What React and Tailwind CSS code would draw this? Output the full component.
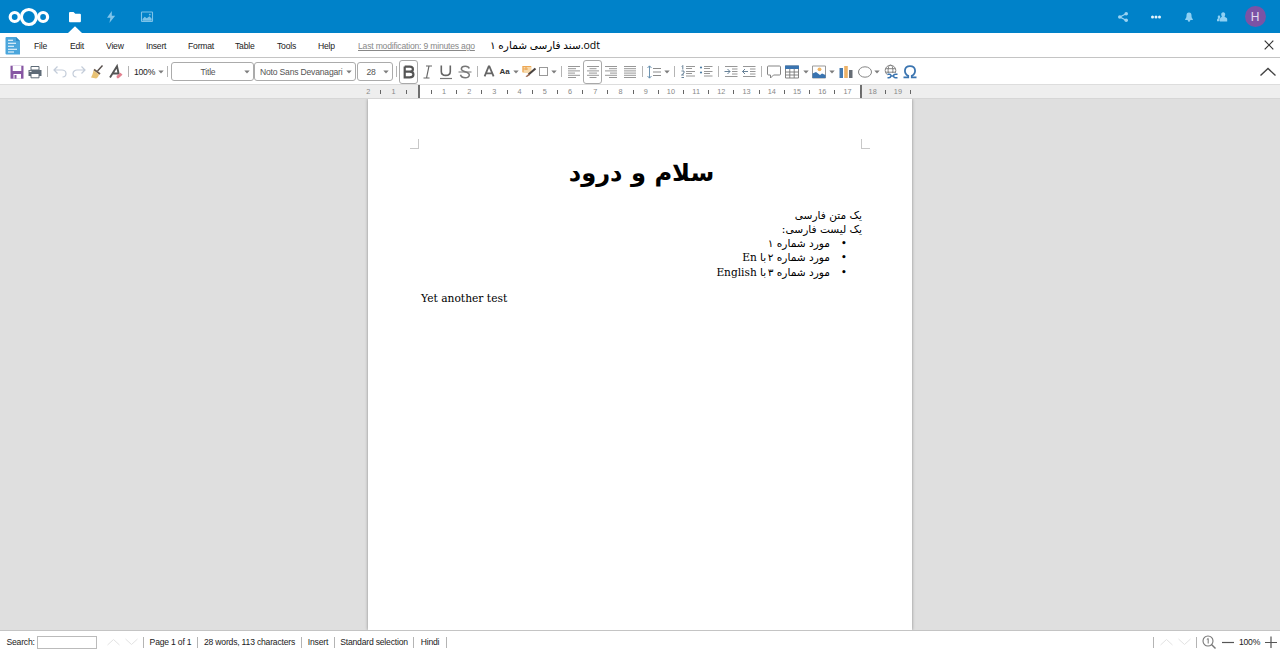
import React from "react";

const Icon = ({ w = 18, h = 18, children, className = "" }) => (
  <svg width={w} height={h} viewBox={`0 0 ${w} ${h}`} fill="none" className={`shrink-0 ${className}`}>
    {children}
  </svg>
);

const Cell = ({ className, children }) => (
  <div className={`flex h-full shrink-0 items-center justify-center ${className}`}>{children}</div>
);

const Sep = ({ className }) => (
  <Cell className={className}>
    <div className="h-[11px] w-px bg-[#b4b4b4]" />
  </Cell>
);

const Arrow = ({ className = "" }) => (
  <Cell className={className}>
    <Icon w={6} h={4}>
      <path d="M0.3 0.5h5.4L3 3.5z" fill="#7d7d7d" />
    </Icon>
  </Cell>
);

const Combo = ({ className, label, labelClass }) => (
  <div className={`flex h-[19px] shrink-0 items-center rounded-[3px] border border-[#ababab] bg-white pr-[3px] text-[#555] ${className}`}>
    <span className={`flex-1 whitespace-nowrap ${labelClass}`}>{label}</span>
    <Icon w={6} h={4}>
      <path d="M0.3 0.5h5.4L3 3.5z" fill="#7d7d7d" />
    </Icon>
  </div>
);

const Lines = ({ rows }) => (
  <Icon>
    {rows.map(([a, b], i) => (
      <path key={i} d={`M${a} ${3.5 + i * 2.2}H${b}`} stroke="#8b8b8b" strokeWidth="0.9" />
    ))}
  </Icon>
);

const Header = () => (
  <header className="flex h-[33px] shrink-0 items-center bg-[#0082c9]">
    <Cell className="w-[57px]">
      <Icon w={46} h={24} className="mt-[1px]">
        <g stroke="#fff" strokeWidth="3.2">
          <circle cx="8.7" cy="12" r="4.5" />
          <circle cx="22.9" cy="12" r="7.5" />
          <circle cx="37.1" cy="12" r="4.5" />
        </g>
      </Icon>
    </Cell>
    <Cell className="relative w-[36px]">
      <Icon w={14} h={14}>
        <path d="M1 3.1Q1 2 2 2h3.5l1.8 1.7h4.6q1 0 1 1v6.5q0 1-1 1H2q-1 0-1-1z" fill="#fff" />
      </Icon>
      <Icon w={14} h={7} className="absolute bottom-0 left-[11px]">
        <path d="M0 7L7 0.3 14 7z" fill="#fff" />
      </Icon>
    </Cell>
    <Cell className="w-[36px]">
      <Icon w={14} h={14}>
        <path d="M7.8 1L3 7.8h3.4L5.4 13l5.800-7.300H7.800z" fill="#7fc4ea" />
      </Icon>
    </Cell>
    <Cell className="w-[36px]">
      <Icon w={14} h={14}>
        <rect x="1.5" y="2" width="11" height="9.5" rx="0.6" stroke="#7cc2e8" strokeWidth="1.1" />
        <path d="M2.5 10.8V9l2.2-2.3 2 1.6 2.8-2 2.2 2.5v2z" fill="#7cc2e8" />
        <circle cx="9.8" cy="4.6" r="0.9" fill="#7cc2e8" />
      </Icon>
    </Cell>
    <div className="flex-1" />
    <Cell className="w-[33px]">
      <Icon w={12} h={12}>
        <path d="M9.2 2.8L2.8 6l6.4 3.2" stroke="#9bd3f2" strokeWidth="1.2" />
        <circle cx="9.2" cy="2.7" r="1.8" fill="#9bd3f2" />
        <circle cx="2.8" cy="6" r="1.8" fill="#9bd3f2" />
        <circle cx="9.2" cy="9.3" r="1.8" fill="#9bd3f2" />
      </Icon>
    </Cell>
    <Cell className="w-[33px]">
      <Icon w={12} h={12}>
        <circle cx="2.5" cy="6" r="1.5" fill="#e6f4fc" />
        <circle cx="6" cy="6" r="1.5" fill="#e6f4fc" />
        <circle cx="9.5" cy="6" r="1.5" fill="#e6f4fc" />
      </Icon>
    </Cell>
    <Cell className="w-[33px]">
      <Icon w={12} h={12}>
        <path d="M6 1.6c-1.8 0-2.5 1.3-2.5 2.9 0 2-.5 2.7-1.3 3.6v.8h7.6v-.8c-.8-.9-1.3-1.6-1.3-3.6 0-1.6-.7-2.9-2.5-2.9z" fill="#8fd0f3" />
        <circle cx="6" cy="9.5" r="1.2" fill="#8fd0f3" />
      </Icon>
    </Cell>
    <Cell className="w-[33px]">
      <Icon w={12} h={12}>
        <path d="M7.2 1.2c1.400 0 2 1 2 2.100 0 1-.3 1.600-.700 2.100.2 1 2.600 1 2.700 2.400v2.700H4V7.900c0-1.400 1.700-1.500 1.900-2.400C5.500 5 5.200 4.400 5.200 3.300c0-1.100.600-2.100 2-2.100z" fill="#8fd0f3" />
        <path d="M3 4.400c1 0 1.300.700 1.300 1.400 0 1.100-.8 1.500-.7 2.200v2.200H1V8.700c0-.8 1-.9 1.200-1.400-.400-.4-.500-.900-.500-1.500 0-.7.400-1.400 1.300-1.400z" fill="#8fd0f3" />
      </Icon>
    </Cell>
    <Cell className="w-[34px]">
      <div className="flex size-[21px] items-center justify-center rounded-full bg-[#7b53a5] text-[12px] text-[#e4dcf0]">H</div>
    </Cell>
    <div className="w-[8px]" />
  </header>
);

const MenuBar = () => (
  <nav className="flex h-[25px] shrink-0 items-center border-b border-[#c4c4c4] bg-white text-[#222]">
    <div className="w-[34px] pt-[2px] pl-[5px]">
      <Icon w={16} h={18}>
        <path d="M1.500 0H11l4 4v13.500H1.500Q0.500 17.500 0.500 16.500V1Q0.500 0 1.500 0z" fill="#4ba6dc" />
        <path d="M11 0l4 4h-4z" fill="#2f8cc6" />
        <path d="M3 3.200h5M3 6.200h8M3 9.200h6M3 12.200h9M3 15h6" stroke="#fff" strokeWidth="1.100" />
      </Icon>
    </div>
    <div className="flex items-center pt-[2px]">
      <span className="w-[36px]">File</span>
      <span className="w-[36px]">Edit</span>
      <span className="w-[40px]">View</span>
      <span className="w-[42px]">Insert</span>
      <span className="w-[47px]">Format</span>
      <span className="w-[42px]">Table</span>
      <span className="w-[41px]">Tools</span>
      <span className="w-[40px]">Help</span>
      <span className="w-[132px] whitespace-nowrap text-[#888] underline">Last modification: 9 minutes ago</span>
    </div>
    <span className="whitespace-nowrap font-['Open_Sans','DejaVu_Sans',sans-serif] text-[10.500px] leading-[14px] tracking-normal text-black">سند فارسی شماره ۱.odt</span>
    <div className="flex-1" />
    <Icon w={10} h={10} className="mr-[6px]">
      <path d="M0.700 0.700l8.600 8.600M9.300 0.700L0.700 9.300" stroke="#333" strokeWidth="1.200" />
    </Icon>
  </nav>
);

const Toolbar = () => (
  <div className="flex h-[26px] shrink-0 items-center bg-white pt-px pl-[7px] text-[#333]">
    <Cell className="w-[19px]">
      <Icon>
        <path d="M2.500 2.700h13v13h-13z" fill="#8756a3" />
        <path d="M4.700 2.700h8.600V8H4.700z" fill="#fff" />
        <path d="M5.500 11h7.500v4.700H5.500z" fill="#fff" />
        <path d="M6.500 12h2v3.700h-2z" fill="#8756a3" />
      </Icon>
    </Cell>
    <Cell className="w-[18px]">
      <Icon>
        <path d="M5 3.500h8V7H5z" stroke="#5e6b77" fill="#fff" />
        <path d="M2.500 7h13v6h-13z" fill="#5e6b77" />
        <path d="M5 10.500h8v4.300H5z" fill="#fff" stroke="#5e6b77" />
        <path d="M3.500 8.400h2" stroke="#fff" />
      </Icon>
    </Cell>
    <Sep className="w-[7px]" />
    <Cell className="w-[18px]">
      <Icon>
        <path d="M6.500 3.500L3 7l3.500 3.500M3 7h8c2 0 4 1.500 4 3.500s-1 3.500-3.500 3.500" stroke="#c3ccd9" strokeWidth="1.200" />
      </Icon>
    </Cell>
    <Cell className="w-[19px]">
      <Icon>
        <path d="M11.500 3.500L15 7l-3.500 3.500M15 7H7c-2 0-4 1.500-4 3.500s1 3.500 3.500 3.500" stroke="#c3ccd9" strokeWidth="1.200" />
      </Icon>
    </Cell>
    <Cell className="w-[18px]">
      <Icon>
        <path d="M14.500 2.500L9.500 8" stroke="#554d49" strokeWidth="1.400" />
        <path d="M6 6.500l6 4.500" stroke="#6b5a4c" strokeWidth="1.800" />
        <path d="M5.500 7.500l5.500 4c-.500 2-1.500 3.500-3 4L3 14.500c1-2 2-4 2.500-7z" fill="#e9c274" />
      </Icon>
    </Cell>
    <Cell className="w-[19px]">
      <Icon>
        <path d="M3 14.500L10 3.300l1.800 8.200M5.500 10.500h6" stroke="#555" strokeWidth="1.900" />
        <path d="M9.500 13l4-3.200 2 2-4 3.400h-1.600z" fill="#e2818f" />
      </Icon>
    </Cell>
    <Sep className="w-[7px]" />
    <Cell className="w-[25px] text-[#222]">100%</Cell>
    <Arrow className="w-[7px]" />
    <Sep className="w-[7px]" />
    <Combo className="w-[83px]" label="Title" labelClass="text-center" />
    <Combo className="w-[102px]" label="Noto Sans Devanagari" labelClass="pl-[5px]" />
    <Combo className="ml-px w-[36px]" label="28" labelClass="pl-[1px] text-center" />
    <Sep className="w-[6px]" />
    <div className="flex h-[24px] w-[19px] shrink-0 items-center justify-center rounded-[3px] border border-[#a9a9a9]">
      <Icon className="-mx-1">
        <path d="M4.700 3.600h5c4.300 0 4.300 5.100 0 5.100h-5m5 0c5 0 5 5.700 0 5.700h-5V3.600" stroke="#555" strokeWidth="2.200" />
      </Icon>
    </div>
    <Cell className="w-[19px]">
      <Icon>
        <path d="M7 3h6M4.500 15h6M10 3L7.500 15" stroke="#666" strokeWidth="1.200" />
      </Icon>
    </Cell>
    <Cell className="w-[18px]">
      <Icon>
        <path d="M4.300 2.500v6c0 5.200 9 5.200 9 0v-6" stroke="#666" strokeWidth="1.600" />
        <path d="M3 15.500h12" stroke="#777" strokeWidth="1.200" />
      </Icon>
    </Cell>
    <Cell className="w-[19px]">
      <Icon>
        <path d="M13.200 5.500C12.500 2.500 5.600 2.300 5.300 5.900c-.200 3.500 8 2.200 8 6 0 3.800-7.800 3.800-8.800-.200" stroke="#777" strokeWidth="1.500" />
        <path d="M2.500 9h13" stroke="#777" />
      </Icon>
    </Cell>
    <Sep className="w-[6px]" />
    <Cell className="w-[18px]">
      <Icon>
        <path d="M4.600 13.300L8.700 3.500h.700l4.200 9.800M6 10.300h6.200" stroke="#666" strokeWidth="1.800" />
      </Icon>
    </Cell>
    <Cell className="w-[13px] text-[8px] font-bold">Aa</Cell>
    <Arrow className="w-[9px]" />
    <Cell className="w-[18px]">
      <Icon>
        <path d="M2.500 3h9v7h-9z" fill="#f7d9ab" />
        <path d="M3 3.500h8M3 6h5M3 3v6M6 3v4" stroke="#eda755" strokeWidth="1.200" />
        <path d="M15.500 5.500L8.500 11.500" stroke="#4a4340" strokeWidth="2.200" />
        <path d="M9 10.500l-3.500 3 1.500.500 3-2z" fill="#9b6a52" />
      </Icon>
    </Cell>
    <Cell className="w-[11px]">
      <div className="size-[9px] border border-[#999]" />
    </Cell>
    <Arrow className="w-[9px]" />
    <Sep className="w-[7px]" />
    <Cell className="w-[18px]"><Lines rows={[[3, 15], [3, 11], [3, 15], [3, 10], [3, 15], [3, 11]]} /></Cell>
    <div className="flex h-[24px] w-[19px] shrink-0 items-center justify-center rounded-[3px] border border-[#a9a9a9]">
      <div className="-mx-1"><Lines rows={[[3, 15], [5.5, 12.5], [3, 15], [5, 13], [3, 15], [5.5, 12.5]]} /></div>
    </div>
    <Cell className="w-[18px]"><Lines rows={[[3, 15], [7, 15], [3, 15], [8, 15], [3, 15], [7, 15]]} /></Cell>
    <Cell className="w-[19px]"><Lines rows={[[3, 15], [3, 15], [3, 15], [3, 15], [3, 15], [3, 15]]} /></Cell>
    <Sep className="w-[6px]" />
    <Cell className="w-[18px]">
      <Icon>
        <path d="M4.500 3v12M2.500 5l2-2.200L6.500 5M2.500 13l2 2.200 2-2.200" stroke="#5d88a8" strokeWidth="0.900" />
        <path d="M8 5.500h8M8 9h8M8 12.500h8" stroke="#8b8b8b" />
      </Icon>
    </Cell>
    <Arrow className="w-[8px]" />
    <Sep className="w-[7px]" />
    <Cell className="w-[19px]">
      <Icon>
        <path d="M3.800 2.500v4M2.800 3.500l1-1M2.500 8h2.500v2l-2.500 2h2.500M2.500 14.500h2.500" stroke="#57748c" strokeWidth="0.900" />
        <path d="M7 3.500h9M7 5.500h6M7 8.500h9M7 10.500h6M7 13h9" stroke="#8b8b8b" strokeWidth="0.900" />
      </Icon>
    </Cell>
    <Cell className="w-[18px]">
      <Icon>
        <circle cx="4" cy="4.500" r="1.100" fill="#4f7fa6" />
        <circle cx="4" cy="9.500" r="1.100" fill="#4f7fa6" />
        <path d="M7 3.500h8.500M7 5.500h6M7 8.500h8.500M7 10.500h6M7 13h8.500" stroke="#8b8b8b" strokeWidth="0.900" />
      </Icon>
    </Cell>
    <Sep className="w-[6px]" />
    <Cell className="w-[19px]">
      <Icon>
        <path d="M3 3.500h12.500M10 6h5.500M10 8.500h5.500M10 11h5.500M3 13.500h12.500" stroke="#8b8b8b" strokeWidth="0.900" />
        <path d="M2.500 8.500h5.500M5.500 6l2.500 2.500L5.500 11" stroke="#57748c" strokeWidth="0.900" />
      </Icon>
    </Cell>
    <Cell className="w-[18px]">
      <Icon>
        <path d="M3 3.500h12.500M10 6h5.500M10 8.500h5.500M10 11h5.500M3 13.500h12.500" stroke="#8b8b8b" strokeWidth="0.900" />
        <path d="M2.500 8.500H8M5 6L2.500 8.500 5 11" stroke="#57748c" strokeWidth="0.900" />
      </Icon>
    </Cell>
    <Sep className="w-[7px]" />
    <Cell className="w-[18px]">
      <Icon>
        <path d="M3.500 3h11q1 0 1 1v7q0 1-1 1H8.500L5.500 15v-3h-2q-1 0-1-1V4q0-1 1-1z" stroke="#858585" strokeWidth="1" />
      </Icon>
    </Cell>
    <Cell className="w-[18px]">
      <Icon>
        <path d="M2.500 3h13v12h-13z" fill="#fff" stroke="#777" strokeWidth="0.900" />
        <path d="M2 2.500h14v3.500H2z" fill="#3a74b0" />
        <path d="M2.500 9h13M2.500 12h13M6.800 6v9M11.200 6v9" stroke="#777" strokeWidth="0.900" />
      </Icon>
    </Cell>
    <Arrow className="w-[9px]" />
    <Cell className="w-[18px]">
      <Icon>
        <path d="M2.500 3h13v12h-13z" fill="#fff" stroke="#999" />
        <path d="M2.500 15v-4.500l3.500-1.500 4 3 2-1.500 3.500 1.500v3z" fill="#3a74b0" />
        <circle cx="9.500" cy="6.300" r="1.900" fill="#f0b565" />
      </Icon>
    </Cell>
    <Arrow className="w-[7px]" />
    <Cell className="w-[21px]">
      <Icon>
        <path d="M2.500 5h3.500v10H2.500z" fill="#4379b0" />
        <path d="M7.200 3h3.600v12H7.200z" fill="#edb267" />
        <path d="M12 7h3.500v8H12z" fill="#666d75" />
      </Icon>
    </Cell>
    <Cell className="w-[17px]">
      <Icon w={16} h={18}><ellipse cx="8" cy="9" rx="6.500" ry="5.200" stroke="#858585" /></Icon>
    </Cell>
    <Arrow className="w-[8px]" />
    <Cell className="w-[19px]">
      <Icon>
        <circle cx="8.500" cy="7.500" r="5.300" stroke="#777" strokeWidth="0.900" />
        <ellipse cx="8.500" cy="7.500" rx="2.400" ry="5.300" stroke="#777" strokeWidth="0.900" />
        <path d="M3.500 5.700h10M3.500 9.200h10" stroke="#777" strokeWidth="0.900" />
        <path d="M5.500 10h10.500v6H5.500z" fill="#fff" />
        <path d="M5.500 11.300h2c2.500 0 1.500 3.400-.500 3.400H5.500M15.500 11.300h-2c-2.500 0-2.500 3.400 0 3.400h2M8.500 13h3.500" stroke="#3a74b0" strokeWidth="1.400" />
      </Icon>
    </Cell>
    <Cell className="w-[19px]">
      <Icon>
        <path d="M2.500 14.400h4.700v-1.600C2.500 10.400 2.700 3.200 9 3.200s6.500 7.200 1.800 9.600v1.600h4.700" stroke="#3a74b0" strokeWidth="1.800" />
      </Icon>
    </Cell>
    <div className="flex-1" />
    <Icon w={18} h={10} className="mr-[3px]">
      <path d="M1.500 8.500L9 1.500l7.500 7" stroke="#444" strokeWidth="1.400" />
    </Icon>
  </div>
);

const halfSteps = Array.from({ length: 44 }, (_, i) => i - 4);

const Ruler = () => (
  <div className="flex h-[15px] shrink-0 border-t border-b border-t-[#ddd] border-b-[#d6d6d6] bg-[#eee]">
    <div className="w-[361px] shrink-0" />
    <div className="relative flex w-[552px] shrink-0 overflow-hidden bg-[#eee]">
      <div className="w-[57px] shrink-0" />
      <div className="w-[444px] shrink-0 border-x-2 border-[#6f6f6f] bg-white" />
      <div className="absolute inset-y-0 left-px flex items-center text-[7.300px] tracking-normal text-[#888]">
        {halfSteps.map((s) => (
          <div key={s} className="flex w-[12.620px] shrink-0 items-center justify-center">
            {s % 2 !== 0 ? <div className="h-[4px] w-px bg-[#666]" /> : s === 0 || s > 38 ? null : Math.abs(s / 2)}
          </div>
        ))}
      </div>
    </div>
  </div>
);

const Item = ({ children }) => (
  <li className="flex">
    <span className="w-[32px] shrink-0 pr-[15px]">•</span>
    <span>{children}</span>
  </li>
);

const Document = () => (
  <main className="flex flex-1 justify-center overflow-hidden bg-[#dfdfdf]">
    <div className="w-[544px] bg-white font-['DejaVu_Serif','DejaVu_Sans',serif] text-[10.700px] leading-[14.150px] tracking-normal text-black shadow-[0_0_3px_#888]">
      <div className="flex justify-between px-[42px] pt-[40px]">
        <div className="h-[10px] w-[9px] border-r border-b border-[#c8c8c8]" />
        <div className="h-[10px] w-[9px] border-b border-l border-[#c8c8c8]" />
      </div>
      <div className="pr-[50px] pl-[53px]">
        <h1 dir="rtl" className="h-[59px] pt-[8px] text-center font-['DejaVu_Sans',sans-serif] text-[24.200px] leading-[32px] font-bold">سلام و درود</h1>
        <div dir="rtl" className="font-['DejaVu_Serif','DejaVu_Sans',serif] text-[10.600px]">
          <p>یک متن فارسی</p>
          <p>یک لیست فارسی:</p>
          <ul>
            <Item>مورد شماره ۱</Item>
            <Item>مورد شماره ۲ <span className="-mr-[2px]">با En</span></Item>
            <Item>مورد شماره ۳ <span className="-mr-[2px]">با English</span></Item>
          </ul>
        </div>
        <p className="mt-[13.500px]">Yet another test</p>
      </div>
    </div>
  </main>
);

const UpDown = ({ className }) => (
  <Cell className={`gap-[5px] ${className}`}>
    <Icon w={13} h={8}><path d="M0.500 7L6.500 1.500 12.500 7" stroke="#e2e2e2" /></Icon>
    <Icon w={13} h={8}><path d="M0.500 1L6.500 6.500 12.500 1" stroke="#e2e2e2" /></Icon>
  </Cell>
);

const Footer = () => (
  <footer className="flex h-[24px] shrink-0 items-center border-t border-[#c4c4c4] bg-white pb-px text-[#222]">
    <span className="w-[37px] pl-[6.500px] whitespace-nowrap">Search:</span>
    <input className="h-[13px] w-[60px] border border-[#bbb]" aria-label="Search" />
    <UpDown className="ml-[8px] w-[34px]" />
    <Sep className="w-[9px]" />
    <Cell className="w-[45px] whitespace-nowrap">Page 1 of 1</Cell>
    <Sep className="w-[9px]" />
    <Cell className="w-[95px] whitespace-nowrap">28 words, 113 characters</Cell>
    <Sep className="w-[9px]" />
    <Cell className="w-[24px]">Insert</Cell>
    <Sep className="w-[9px]" />
    <Cell className="w-[70px] whitespace-nowrap">Standard selection</Cell>
    <Sep className="w-[9px]" />
    <Cell className="w-[24px]">Hindi</Cell>
    <Sep className="w-[9px]" />
    <div className="flex-1" />
    <Sep className="w-[6px]" />
    <UpDown className="w-[38px]" />
    <Sep className="w-[5px]" />
    <Cell className="w-[20px]">
      <Icon w={18} h={18}>
        <circle cx="8" cy="8" r="5" stroke="#777" strokeWidth="1.100" />
        <path d="M11.500 11.500l4 4" stroke="#777" strokeWidth="1.400" />
        <path d="M6.800 6.500l1.400-1v5" stroke="#666" strokeWidth="0.900" />
      </Icon>
    </Cell>
    <Cell className="w-[17px]">
      <Icon w={12} h={12}><path d="M0 6.500h12" stroke="#555" strokeWidth="1.200" /></Icon>
    </Cell>
    <Cell className="w-[27px]">100%</Cell>
    <Cell className="w-[15px]">
      <Icon w={12} h={12}><path d="M0 6.500h12M6 0.500v12" stroke="#555" strokeWidth="1.200" /></Icon>
    </Cell>
    <div className="w-[2px]" />
  </footer>
);

export default function App() {
  return (
    <div className="flex h-[654px] w-[1280px] flex-col overflow-hidden bg-white font-['Liberation_Sans',Arial,sans-serif] text-[8.600px] leading-[12px] tracking-[-0.200px]">
      <Header />
      <MenuBar />
      <Toolbar />
      <Ruler />
      <Document />
      <Footer />
    </div>
  );
}
